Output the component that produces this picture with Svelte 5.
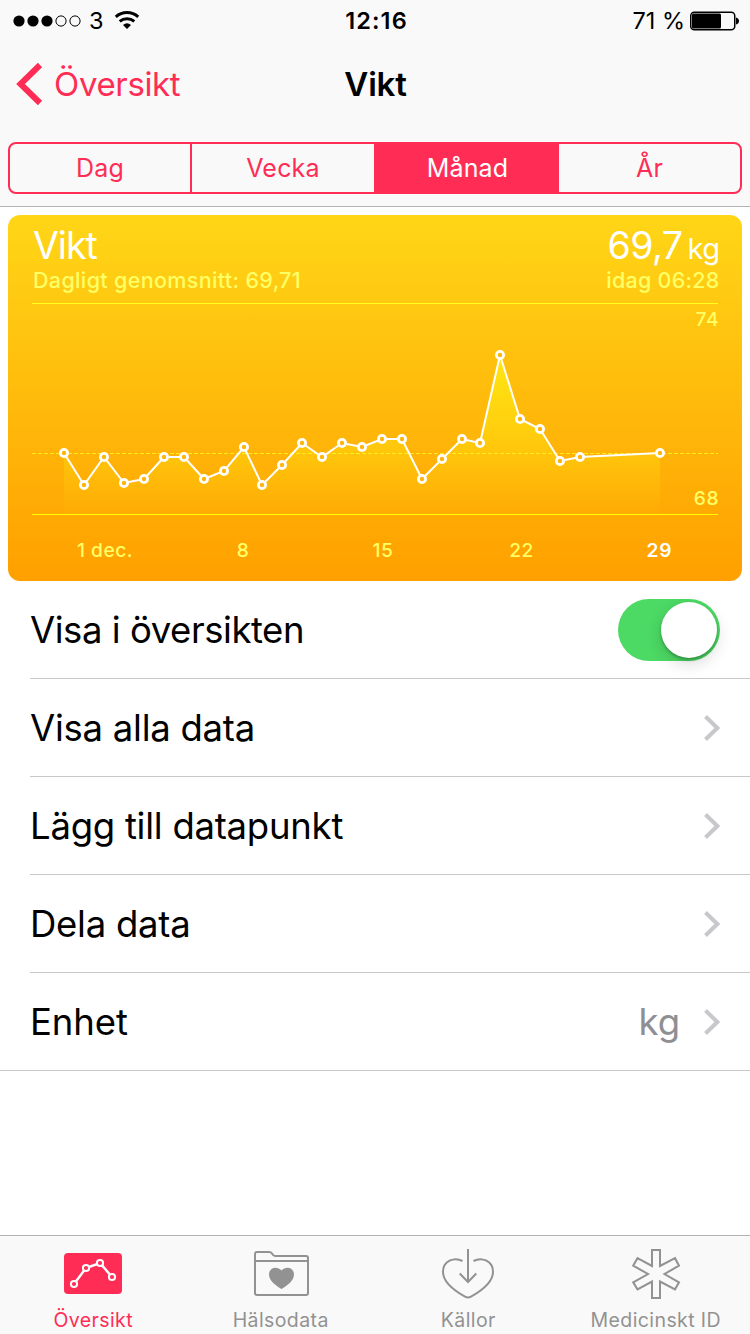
<script lang="ts">
    const segments = ["Dag", "Vecka", "Månad", "År"];
    let selected = $state(2);
    let showInOverview = $state(true);

    // chart coordinates, relative to the card
    const points = [
        [56, 238], [76, 270], [96, 242], [116, 268], [136, 264], [156, 242], [176, 242],
        [196, 264], [216, 256], [236, 232], [254, 270], [274, 250], [294, 228], [314, 242],
        [334, 228], [354, 232], [374, 224], [394, 224], [414, 264], [434, 244], [454, 224],
        [472, 228], [492, 140], [512, 204], [532, 214], [552, 246], [572, 242], [652, 238],
    ];
    const line = points.map((p) => p.join(",")).join(" ");
    const area = `56,299 ${line} 652,299`;

    const days = [
        { x: 97, label: "1 dec." },
        { x: 235, label: "8" },
        { x: 375, label: "15" },
        { x: 513.5, label: "22" },
        { x: 651.5, label: "29", today: true },
    ];

    const rows = [
        { label: "Visa alla data" },
        { label: "Lägg till datapunkt" },
        { label: "Dela data" },
        { label: "Enhet", value: "kg" },
    ];

    const tabs = [
        { label: "Översikt", icon: "chart" },
        { label: "Hälsodata", icon: "folder" },
        { label: "Källor", icon: "sources" },
        { label: "Medicinskt ID", icon: "medical" },
    ];
</script>

<div class="screen">
    <header>
        <div class="status">
            <div class="signal">
                <svg width="68" height="12" viewBox="0 0 68 12">
                    {#each [6, 20, 34, 48, 62] as cx, i}
                        <circle {cx} cy="6" r={i < 3 ? 5.6 : 5.1} class={i < 3 ? "full" : "empty"} />
                    {/each}
                </svg>
                <span class="carrier">3</span>
                <svg class="wifi" width="26" height="19" viewBox="0 0 26 19">
                    <path d="M1.8 5.8 A17 17 0 0 1 24.2 5.8" />
                    <path d="M5.7 10.3 A11.4 11.4 0 0 1 20.3 10.3" />
                    <path class="dot" d="M9 13.9 A6.3 6.3 0 0 1 17 13.9 L13 18 Z" />
                </svg>
            </div>
            <div class="clock">12:16</div>
            <div class="battery">
                <span>71 %</span>
                <svg width="50" height="20" viewBox="0 0 50 20">
                    <rect x=".75" y="1.25" width="44" height="17.5" rx="3.5" class="shell" />
                    <rect x="2" y="2.5" width="29" height="15" rx="1.5" />
                    <path d="M46 6.5 Q49 7.5 49 10 Q49 12.5 46 13.5 Z" />
                </svg>
            </div>
        </div>
        <nav>
            <button class="back">
                <svg width="28" height="44" viewBox="0 0 28 44">
                    <path d="M24 3 L4.5 22 L24 41" />
                </svg>
                <span>Översikt</span>
            </button>
            <h1>Vikt</h1>
        </nav>
        <div class="segmented">
            {#each segments as segment, i}
                <button class:active={selected === i} onclick={() => (selected = i)}>{segment}</button>
            {/each}
        </div>
    </header>

    <main>
        <section class="card">
            <div class="summary">
                <div>
                    <div class="title">Vikt</div>
                    <div class="sub average">Dagligt genomsnitt: 69,71</div>
                </div>
                <div class="right">
                    <div class="title num">69,7<small>kg</small></div>
                    <div class="sub today">idag 06:28</div>
                </div>
            </div>
            <svg class="chart" width="734" height="278" viewBox="0 88 734 278">
                <defs>
                    <linearGradient id="fill" gradientUnits="userSpaceOnUse" x1="0" y1="140" x2="0" y2="299">
                        <stop offset="0" stop-color="#ffe714" />
                        <stop offset=".5" stop-color="#ffcd0d" />
                        <stop offset="1" stop-color="#ffab05" />
                    </linearGradient>
                </defs>
                <polygon points={area} fill="url(#fill)" />
                <path class="rule" d="M24 88.5 H710" />
                <path class="rule dashed" d="M24 238.5 H710" />
                <path class="rule bottom" d="M24 299.5 H710" />
                <polyline points={line} />
                {#each points as [x, y]}
                    <circle cx={x} cy={y} r="3.6" />
                {/each}
                <text x="711" y="111" text-anchor="end">74</text>
                <text x="711" y="290" text-anchor="end">68</text>
                {#each days as day}
                    <text x={day.x} y="342" text-anchor="middle" class:now={day.today}>{day.label}</text>
                {/each}
            </svg>
        </section>

        <ul>
            <li>
                <span>Visa i översikten</span>
                <button
                    class="switch"
                    class:on={showInOverview}
                    aria-label="Visa i översikten"
                    onclick={() => (showInOverview = !showInOverview)}
                >
                    <i></i>
                </button>
            </li>
            {#each rows as row}
                <li>
                    <span>{row.label}</span>
                    {#if row.value}
                        <span class="value">{row.value}</span>
                    {/if}
                    <svg class="chevron" width="16" height="26" viewBox="0 0 16 26">
                        <path d="M1.5 1.5 L13.3 13 L1.5 24.5" />
                    </svg>
                </li>
            {/each}
        </ul>
    </main>

    <footer>
        {#each tabs as tab, i}
            <button class:current={i === 0}>
                <svg width="60" height="52" viewBox="0 0 60 52">
                    {#if tab.icon === "chart"}
                        <rect x="1" y="5" width="58" height="41" rx="4" class="solid" />
                        <g class="white">
                            <path d="M11 36 L23 20 L37 15 L49 29" />
                            <circle cx="11" cy="36" r="3.1" />
                            <circle cx="23" cy="20" r="3.1" />
                            <circle cx="37" cy="15" r="3.1" />
                            <circle cx="49" cy="29" r="3.1" />
                        </g>
                    {:else if tab.icon === "folder"}
                        <path d="M4 46 V6 Q4 4 6 4 H18 Q20 4 21 5.5 Q22.3 8 24 8 H55 Q57 8 57 10 V45 Q57 47 55 47 H6 Q4 47 4 45 M4 13 H57" />
                        <path class="solid" d="M30.5 41 C25 37.5 18 33 18 26.5 C18 19.5 26 17.5 30.5 22.5 C35 17.5 43 19.5 43 26.5 C43 33 36 37.5 30.5 41 Z" />
                    {:else if tab.icon === "sources"}
                        <path d="M24.5 13 C16 8.5 5 13 5 24 C5 34 17 43 27 48.7 Q30 50.4 33 48.7 C43 43 55 34 55 24 C55 13 44 8.5 35.5 13" />
                        <path d="M30 1 V33 M21.7 25.5 L30 34 L38.3 25.5" />
                    {:else}
                        <path d="M26 2 H34 V18 L49 10.2 L53 17.7 L38.5 26 L53 34.3 L49 41.3 L34 33.5 V50 H26 V33.5 L11.5 41.3 L7.2 34.3 L22 26 L7.2 17.7 L11.5 10.2 L26 18 Z" />
                    {/if}
                </svg>
                <span>{tab.label}</span>
            </button>
        {/each}
    </footer>
</div>

<style>
    :global(body) {
        background: #fff;
    }

    .screen {
        display: flex;
        flex-direction: column;
        width: 750px;
        height: 1334px;
        overflow: hidden;
        font-family: Inter, "Liberation Sans", sans-serif;
        font-feature-settings: "calt" 0;
        color: #000;
    }

    button {
        margin: 0;
        padding: 0;
        border: none;
        background: none;
        font: inherit;
        letter-spacing: inherit;
        color: inherit;
    }

    header {
        box-sizing: border-box;
        height: 207px;
        background: #f9f9f9;
        border-bottom: 1px solid #b2b2b2;
    }

    .status {
        display: grid;
        grid-template-columns: 1fr auto 1fr;
        align-items: center;
        height: 41px;
        padding: 0 10px 0 13px;
        font-size: 23.5px;
    }

    .signal {
        display: flex;
        align-items: center;
    }

    .signal .full {
        fill: #000;
    }

    .signal .empty {
        fill: none;
        stroke: #000;
    }

    .carrier {
        margin: 0 10px 0 8px;
    }

    .wifi path {
        fill: none;
        stroke: #000;
        stroke-width: 3;
    }

    .wifi .dot {
        fill: #000;
        stroke: none;
    }

    .clock {
        font-weight: 600;
        letter-spacing: 1.1px;
    }

    .battery {
        display: flex;
        align-items: center;
        justify-content: flex-end;
        gap: 5px;
    }

    .battery .shell {
        fill: none;
        stroke: #000;
        stroke-width: 1.5;
    }

    nav {
        display: grid;
        grid-template-columns: 1fr auto 1fr;
        align-items: center;
        height: 85px;
        padding: 0 15px 0 16px;
    }

    .back {
        display: flex;
        align-items: center;
        gap: 10px;
        font-size: 33px;
        letter-spacing: -0.35px;
        color: #ff2d55;
    }

    .back path {
        fill: none;
        stroke: #ff2d55;
        stroke-width: 6;
    }

    h1 {
        margin: 0;
        font-size: 33px;
        font-weight: 600;
        letter-spacing: -0.2px;
    }

    .segmented {
        display: grid;
        grid-template-columns: 180px 184px 185px 1fr;
        box-sizing: border-box;
        height: 52px;
        margin: 16px 8px 0;
        border: 2px solid #ff2d55;
        border-radius: 8px;
        overflow: hidden;
        font-size: 25px;
        letter-spacing: 0.2px;
        color: #ff2d55;
    }

    .segmented button + button {
        border-left: 2px solid #ff2d55;
    }

    .segmented .active {
        background: #ff2d55;
        color: #fff;
    }

    .segmented .active + button {
        border-left: none;
    }

    main {
        flex: 1;
        padding-top: 8px;
    }

    .card {
        height: 366px;
        margin: 0 8px;
        border-radius: 12px;
        background: linear-gradient(#ffd617, #ffa000);
    }

    .summary {
        display: flex;
        justify-content: space-between;
        box-sizing: border-box;
        height: 88px;
        padding: 9px 22.5px 0 25px;
        color: #fff;
    }

    .right {
        text-align: right;
    }

    .title {
        height: 43px;
        font-size: 37.5px;
        line-height: 44px;
        letter-spacing: -1px;
    }

    .num {
        letter-spacing: -0.5px;
    }

    .title small {
        margin-left: 5px;
        font-size: 29px;
        line-height: 1;
    }

    .sub {
        font-size: 21.5px;
        font-weight: 500;
        line-height: 26px;
        color: #ffff66;
    }

    .average {
        letter-spacing: 0.35px;
    }

    .today {
        letter-spacing: 0.25px;
    }

    .chart {
        display: block;
    }

    .rule {
        stroke: #ffff1e;
    }

    .dashed {
        stroke-dasharray: 4 2;
        opacity: 0.75;
    }

    .bottom {
        stroke: #ffff00;
    }

    polyline {
        fill: none;
        stroke: #fff;
        stroke-width: 2;
    }

    .chart circle {
        fill: #ffb60a;
        stroke: #fff;
        stroke-width: 2.8;
    }

    text {
        font-size: 19.2px;
        font-weight: 500;
        letter-spacing: 0.5px;
        fill: #ffff66;
    }

    .now {
        font-weight: 600;
        letter-spacing: 0.9px;
        fill: #fff;
    }

    ul {
        margin: 0;
        padding: 0;
        list-style: none;
        border-bottom: 1px solid #c8c7cc;
    }

    li {
        display: flex;
        align-items: center;
        box-sizing: border-box;
        height: 98px;
        margin-left: 30px;
        padding-right: 30px;
        border-bottom: 1px solid #c8c7cc;
        font-size: 36.5px;
        letter-spacing: -0.25px;
    }

    li:first-child {
        letter-spacing: -0.45px;
    }

    li:last-child {
        height: 97px;
        border-bottom: none;
        letter-spacing: -0.1px;
    }

    li > span:first-child {
        flex: 1;
    }

    .value {
        margin-right: 24px;
        color: #8e8e93;
    }

    .chevron path {
        fill: none;
        stroke: #c7c7cc;
        stroke-width: 4;
    }

    .switch {
        display: flex;
        align-items: center;
        width: 102px;
        height: 62px;
        padding: 0 3px;
        border-radius: 31px;
        background: #e5e5ea;
    }

    .switch.on {
        justify-content: flex-end;
        background: #4cd964;
    }

    .switch i {
        width: 56px;
        height: 56px;
        border-radius: 50%;
        background: #fff;
        box-shadow: 0 6px 16px rgba(0, 0, 0, 0.15), 0 2px 3px rgba(0, 0, 0, 0.25);
    }

    footer {
        display: flex;
        box-sizing: border-box;
        height: 99px;
        border-top: 1px solid #b2b2b2;
        background: #f9f9f9;
        font-size: 19.5px;
        color: #929292;
    }

    footer button {
        display: flex;
        flex: 1;
        flex-direction: column;
        align-items: center;
        padding: 12px 1px 0 0;
    }

    footer span {
        margin-top: 8px;
        line-height: 24px;
        letter-spacing: 0.4px;
    }

    footer path {
        fill: none;
        stroke: #929292;
        stroke-width: 2;
    }

    footer path.solid {
        fill: #929292;
        stroke: none;
    }

    footer .current {
        color: #ff2d55;
    }

    footer rect.solid {
        fill: #ff2d55;
    }

    footer .white path {
        stroke: #fff;
        stroke-width: 2.4;
    }

    footer .white circle {
        fill: #ff2d55;
        stroke: #fff;
        stroke-width: 2;
    }
</style>
